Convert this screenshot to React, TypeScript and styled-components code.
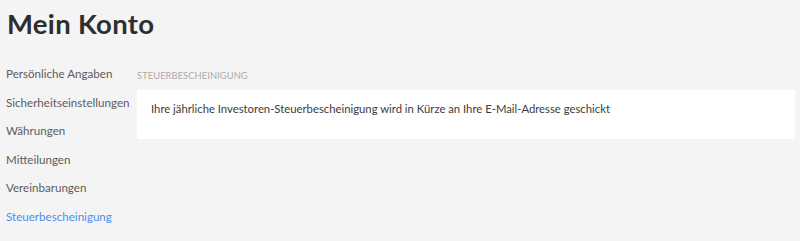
import React from "react";
import styled, { createGlobalStyle } from "styled-components";

const NAV_ITEMS = [
  { id: 1, label: "Persönliche Angaben" },
  { id: 2, label: "Sicherheitseinstellungen" },
  { id: 3, label: "Währungen" },
  { id: 4, label: "Mitteilungen" },
  { id: 5, label: "Vereinbarungen" },
  { id: 6, label: "Steuerbescheinigung", active: true },
];

const GlobalStyle = createGlobalStyle`
  html, body {
    margin: 0;
    padding: 0;
    background: #f4f4f4;
  }
  body {
    font-family: "Lato", "Open Sans", sans-serif;
    color: #4a4a4a;
  }
`;

const App = () => {
  return (
    <>
      <GlobalStyle />
      <Page>
        <Title>Mein Konto</Title>
        <Layout>
          <SideNav>
            {NAV_ITEMS.map((item) => (
              <NavLink key={item.id} $active={item.active}>
                {item.label}
              </NavLink>
            ))}
          </SideNav>
          <Content>
            <SectionLabel>Steuerbescheinigung</SectionLabel>
            <Card>
              Ihre jährliche Investoren-Steuerbescheinigung wird in Kürze an Ihre
              E-Mail-Adresse geschickt
            </Card>
          </Content>
        </Layout>
      </Page>
    </>
  );
};

export default App;

const Page = styled.div`
  width: 800px;
  height: 241px;
  padding: 7px 5px 0 6px;
  box-sizing: border-box;
  overflow: hidden;
`;

const Title = styled.h1`
  margin: 0 0 0 1px;
  font-family: "Lato", sans-serif;
  font-size: 27.5px;
  font-weight: 700;
  line-height: 34px;
  color: #2e2e2e;
  letter-spacing: 0.3px;
`;

const Layout = styled.div`
  display: flex;
  margin-top: 19px;
`;

const SideNav = styled.nav`
  width: 131px;
  display: flex;
  flex-direction: column;
`;

const NavLink = styled.a<{ $active?: boolean }>`
  display: block;
  font-size: 11.6px;
  line-height: 28.5px;
  color: ${(p) => (p.$active ? "#4a8ff0" : "#5c5c5c")};
  cursor: pointer;
  white-space: nowrap;
`;

const Content = styled.section`
  flex: 1;
  display: flex;
  flex-direction: column;
`;

const SectionLabel = styled.h2`
  margin: 0;
  padding-top: 9px;
  font-size: 9.3px;
  font-weight: 400;
  line-height: 14px;
  text-transform: uppercase;
  color: #ababab;
  letter-spacing: 0.1px;
`;

const Card = styled.div`
  margin-top: 7px;
  height: 49px;
  box-sizing: border-box;
  padding: 11px 13px 11px 14px;
  background: #ffffff;
  font-size: 11.3px;
  line-height: 16px;
  color: #3c3c3c;
`;
